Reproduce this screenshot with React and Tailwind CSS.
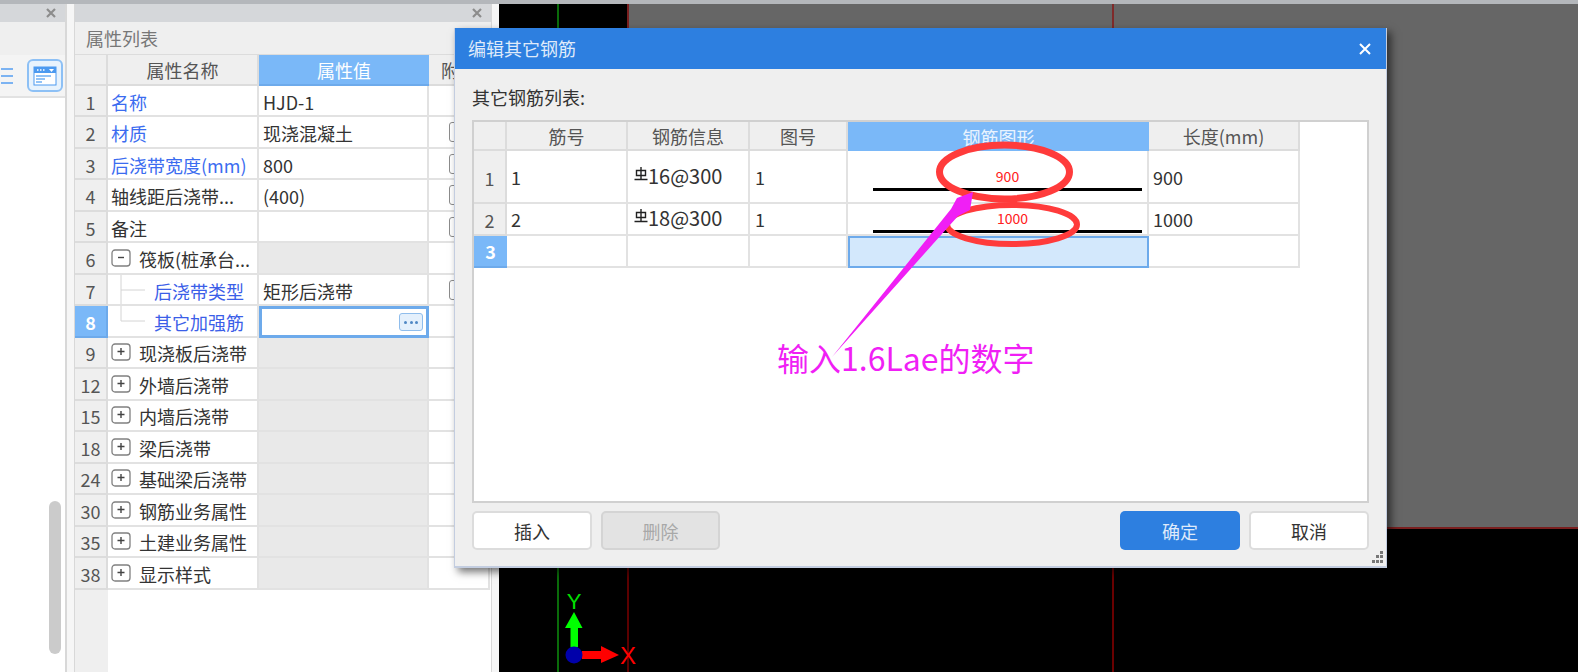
import React from 'react';

const font = { fontFamily: '"Noto Sans CJK SC", "Noto Sans", sans-serif' };

const props = [
  { no: '1', name: '名称', value: 'HJD-1', blue: true, hideCheck: true },
  { no: '2', name: '材质', value: '现浇混凝土', blue: true },
  { no: '3', name: '后浇带宽度(mm)', value: '800', blue: true },
  { no: '4', name: '轴线距后浇带...', value: '(400)' },
  { no: '5', name: '备注', value: '' },
  { no: '6', name: '筏板(桩承台...', toggle: '-' },
  { no: '7', name: '后浇带类型', value: '矩形后浇带', blue: true, child: true },
  { no: '8', name: '其它加强筋', blue: true, child: true, active: true, last: true },
  { no: '9', name: '现浇板后浇带', toggle: '+' },
  { no: '12', name: '外墙后浇带', toggle: '+' },
  { no: '15', name: '内墙后浇带', toggle: '+' },
  { no: '18', name: '梁后浇带', toggle: '+' },
  { no: '24', name: '基础梁后浇带', toggle: '+' },
  { no: '30', name: '钢筋业务属性', toggle: '+' },
  { no: '35', name: '土建业务属性', toggle: '+' },
  { no: '38', name: '显示样式', toggle: '+' },
];

function CloseX() {
  return (
    <svg width="12" height="12" viewBox="0 0 12 12" className="shrink-0">
      <path d="M2 2l8 8M10 2l-8 8" stroke="#8c8c8c" strokeWidth="2.2" />
    </svg>
  );
}

function ToggleBox({ sign }) {
  return (
    <svg width="20" height="18" viewBox="0 0 20 18" className="shrink-0">
      <rect x="1" y="1" width="18" height="16" rx="3" fill="#fff" stroke="#808080" strokeWidth="1.3" />
      <path d={sign === '+' ? 'M6.5 8.5h7M10 5v7' : 'M7 8.5h6'} stroke="#444" strokeWidth="1.4" />
    </svg>
  );
}

function TreeLines({ last }) {
  return (
    <svg width="26" height="32" viewBox="0 0 26 32" className="shrink-0 text-[#d4d4d4]">
      <path d={last ? 'M1 0v16h24' : 'M1 0v32M1 16h24'} fill="none" stroke="currentColor" strokeWidth="1" />
    </svg>
  );
}

function PropRow({ row }) {
  return (
    <div className="grid grid-cols-[33px_151px_170px_61px] h-[31.47px] text-[18px] leading-none text-[#333]">
      <div className={`flex items-center justify-center pt-[2px] border-r-2 border-b-2 ${row.active ? 'bg-[#7ab8f8] border-[#6daaeb] text-white font-bold' : 'bg-[#efefef] border-[#dcdcdc] text-[#555]'}`}>
        {row.no}
      </div>
      <div className="flex items-center border-r-2 border-b-2 border-[#e2e2e2] pl-[3px] bg-white whitespace-nowrap overflow-hidden">
        {row.toggle && <ToggleBox sign={row.toggle} />}
        {row.toggle && <span className="ml-[8px] pt-[2px]">{row.name}</span>}
        {row.child && <span className="ml-[9px]"><TreeLines last={row.last} /></span>}
        {row.child && <span className="ml-[8px] pt-[2px] text-[#3b5ee8]">{row.name}</span>}
        {!row.toggle && !row.child && <span className={`pt-[2px] ${row.blue ? 'text-[#3b6cf0]' : ''}`}>{row.name}</span>}
      </div>
      {row.active ? (
        <div className="flex items-center justify-end border-[3px] border-[#6daaeb] bg-white pr-[3px]">
          <div className="flex w-[24px] h-[18px] items-center justify-center gap-[2.5px] rounded-[3px] border border-[#8fbdec] bg-[#e4f0fc]">
            <span className="w-[3px] h-[3px] rounded-full bg-[#4f87c4]" />
            <span className="w-[3px] h-[3px] rounded-full bg-[#4f87c4]" />
            <span className="w-[3px] h-[3px] rounded-full bg-[#4f87c4]" />
          </div>
        </div>
      ) : (
        <div className={`flex items-center pt-[2px] border-r-2 border-b-2 border-[#e2e2e2] pl-[4px] ${row.toggle ? 'bg-[#e9e9e9]' : 'bg-white'}`}>
          {row.value}
        </div>
      )}
      <div className="flex items-center border-r-2 border-b-2 border-[#e2e2e2] bg-white pl-[20px]">
        {row.value !== undefined && !row.hideCheck && !row.toggle && (
          <div className="w-[18px] h-[20px] rounded-[3px] border border-[#8c8c8c]" />
        )}
      </div>
    </div>
  );
}

function LeftPanel() {
  return (
    <div className="flex flex-col w-[67px] shrink-0 border-r-2 border-[#d8d8d8] bg-white">
      <div className="flex h-[18px] items-center justify-end bg-[#d5d7da] pr-[8px]">
        <CloseX />
      </div>
      <div className="h-[33px] bg-[#efefef]" />
      <div className="flex h-[43px] items-center justify-between border-b-2 border-[#e2e2e2] bg-[#f4f4f4] pr-[2px]">
        <svg width="14" height="20" viewBox="0 0 14 20">
          <path d="M1 3h12M1 10h12M1 17h12" stroke="#7cb3f2" strokeWidth="1.8" />
        </svg>
        <div className="flex w-[36px] h-[33px] items-center justify-center rounded-[6px] border-2 border-[#8dc0f5] bg-[#e8f3fd]">
          <svg width="24" height="20" viewBox="0 0 24 20">
            <rect x="1" y="1" width="22" height="18" fill="#fff" stroke="#4c9af0" strokeWidth="1" />
            <rect x="1" y="1" width="22" height="6" fill="#4c9af0" />
            <path d="M4 4h1.5M7 4h1.5M10 4h1.5" stroke="#fff" strokeWidth="1.6" />
            <path d="M16 3h5l-2.5 3z" fill="#fff" />
            <path d="M3 10h15M3 13h9M3 16h6" stroke="#6fb0f3" strokeWidth="1.4" />
          </svg>
        </div>
      </div>
      <div className="flex flex-1 justify-end pr-[4px] pt-[403px]">
        <div className="w-[12px] h-[153px] rounded-full bg-[#cbcbcb]" />
      </div>
    </div>
  );
}

function PropertyPanel() {
  return (
    <div className="flex flex-col w-[418px] shrink-0 ml-[7px] mr-[7px] border-x border-[#d8d8d8] bg-white overflow-hidden">
      <div className="flex h-[18px] items-center justify-end bg-[#d5d7da] pr-[8px]">
        <CloseX />
      </div>
      <div className="flex h-[33px] items-center bg-[#efefef] pl-[11px] text-[18px] text-[#777] border-b border-[#dcdcdc]">
        属性列表
      </div>
      <div className="grid grid-cols-[33px_151px_170px_61px] h-[31px] text-[18px] leading-none text-[#555]">
        <div className="bg-[#efefef] border-r-2 border-b-2 border-[#dcdcdc]" />
        <div className="flex items-center justify-center bg-[#efefef] border-r-2 border-b-2 border-[#dcdcdc]">属性名称</div>
        <div className="flex items-center justify-center bg-[#7ab8f8] text-white border-b-2 border-[#6daaeb]">属性值</div>
        <div className="flex items-center pl-[12px] bg-[#efefef] border-b-2 border-[#dcdcdc]">附加</div>
      </div>
      {props.map((row) => (
        <PropRow key={row.no} row={row} />
      ))}
      <div className="flex flex-1">
        <div className="w-[33px] bg-[#efefef]" />
        <div className="flex-1 bg-white" />
      </div>
    </div>
  );
}

function Canvas() {
  return (
    <div className="flex-1 flex flex-col bg-black">
      <div className="flex h-[525px]">
        <div className="w-[60px] border-r-2 border-[#0a6b0a]" />
        <div className="w-[68px]" />
        <div className="flex-1 flex bg-[#666666] border-l-2 border-b-2 border-[#7a1f1f]">
          <div className="w-[485px] border-r-2 border-[#7f2a2a]" />
        </div>
      </div>
      <div className="flex flex-1">
        <div className="w-[60px] border-r-2 border-[#0a6b0a]" />
        <div className="w-[70px] border-r-2 border-[#5c0000]" />
        <div className="w-[485px] border-r-2 border-[#6a0000]" />
      </div>
    </div>
  );
}

function RebarMark() {
  return (
    <svg width="14" height="14" viewBox="0 0 14 14" className="shrink-0 mt-[-6px]">
      <path d="M2.5 3.500h9v5h-9zM7 0v12M0.500 12.500h13" fill="none" stroke="#222" strokeWidth="1.4" />
    </svg>
  );
}

const colsClass = 'grid grid-cols-[33px_121px_122px_98px_301px_151px]';

function RebarRow({ no, info, len, tall, shapeLabel, labelClass, shapeClass }) {
  return (
    <div className={`${colsClass} ${tall ? 'h-[53px]' : 'h-[32px]'} text-[18px] leading-none text-[#333]`}>
      <div className="flex items-center justify-center bg-[#efefef] border-r-2 border-b-2 border-[#dcdcdc] text-[#555] pt-[2px]">{no}</div>
      <div className="flex items-center pl-[4px] border-r-2 border-b-2 border-[#e2e2e2] bg-white">{no}</div>
      <div className="flex items-center pl-[6px] border-r-2 border-b-2 border-[#e2e2e2] bg-white">
        <RebarMark />
        <span className="text-[20px] mb-[2px]">{info}</span>
      </div>
      <div className="flex items-center pl-[5px] border-r-2 border-b-2 border-[#e2e2e2] bg-white">1</div>
      <div className={`flex flex-col justify-end border-r-2 border-b-2 border-[#e2e2e2] bg-white pl-[25px] pr-[5px] ${shapeClass}`}>
        <span className={`text-center text-[14px] text-[#ff2020] ${labelClass}`}>{shapeLabel}</span>
        <div className="h-[3px] bg-black" />
      </div>
      <div className="flex items-center pl-[4px] border-r-2 border-b-2 border-[#e2e2e2] bg-white">{len}</div>
    </div>
  );
}

function RebarTable() {
  return (
    <div className="flex-1 border-2 border-[#d0d0d0] bg-white overflow-hidden">
      <div className={`${colsClass} h-[29px] text-[18px] leading-none text-[#555]`}>
        <div className="bg-[#efefef] border-r-2 border-b-2 border-[#dcdcdc]" />
        <div className="flex items-center justify-center bg-[#efefef] border-r-2 border-b-2 border-[#dcdcdc]">筋号</div>
        <div className="flex items-center justify-center bg-[#efefef] border-r-2 border-b-2 border-[#dcdcdc]">钢筋信息</div>
        <div className="flex items-center justify-center bg-[#efefef] border-r-2 border-b-2 border-[#dcdcdc]">图号</div>
        <div className="flex items-center justify-center bg-[#7ab8f8] text-[#e9f3fe]">钢筋图形</div>
        <div className="flex items-center justify-center bg-[#efefef] border-r-2 border-b-2 border-[#dcdcdc]">长度(mm)</div>
      </div>
      <RebarRow no="1" info="16@300" len="900" tall shapeLabel="900" labelClass="mb-[5px]" shapeClass="pb-[11px]" />
      <RebarRow no="2" info="18@300" len="1000" shapeLabel="1000" labelClass="ml-[10px] mb-[5px]" shapeClass="pb-[1px]" />
      <div className={`${colsClass} h-[32px] text-[18px] leading-none`}>
        <div className="flex items-center justify-center bg-[#7ab8f8] text-white font-bold border-b-2 border-[#6daaeb]">3</div>
        <div className="border-r-2 border-b-2 border-[#e2e2e2]" />
        <div className="border-r-2 border-b-2 border-[#e2e2e2]" />
        <div className="border-r-2 border-b-2 border-[#e2e2e2]" />
        <div className="border-2 border-[#6daaeb] bg-[#d3e8fc]" />
        <div className="border-r-2 border-b-2 border-[#e2e2e2]" />
      </div>
    </div>
  );
}

function Grip() {
  return (
    <svg width="14" height="14" viewBox="0 0 14 14" className="absolute right-[2px] bottom-[2px]">
      <g fill="#777">
        <rect x="10" y="1" width="3" height="3" />
        <rect x="6" y="5" width="3" height="3" />
        <rect x="10" y="5" width="3" height="3" />
        <rect x="2" y="10" width="3" height="3" />
        <rect x="6" y="10" width="3" height="3" />
        <rect x="10" y="10" width="3" height="3" />
      </g>
    </svg>
  );
}

function Dialog() {
  return (
    <div className="absolute left-[454px] top-[28px] flex flex-col w-[933px] h-[540px] bg-[#efefef] border-x border-b-2 border-[#c3cde0] shadow-[4px_4px_8px_rgba(0,0,0,0.55)]">
      <div className="flex h-[41px] shrink-0 items-center justify-between bg-[#2d7fe0] pl-[13px] pr-[14px] text-[18px] text-[#dfeafa]">
        <span>编辑其它钢筋</span>
        <svg width="14" height="14" viewBox="0 0 14 14">
          <path d="M2 2l10 10M12 2L2 12" stroke="#fff" strokeWidth="2" />
        </svg>
      </div>
      <div className="flex flex-1 flex-col px-[17px] pb-[16px]">
        <div className="flex h-[51px] shrink-0 items-center pt-[5px] text-[18px] text-[#333]">其它钢筋列表:</div>
        <RebarTable />
        <div className="flex shrink-0 items-center gap-[9px] pt-[8px] text-[18px] leading-none">
          <button className="w-[120px] h-[39px] rounded-[5px] border-2 border-[#dcdcdc] bg-white text-[#333]">插入</button>
          <button className="w-[119px] h-[39px] rounded-[5px] border-2 border-[#d4d4d4] bg-[#e3e3e3] text-[#a8a8a8]">删除</button>
          <button className="ml-auto w-[120px] h-[39px] rounded-[5px] bg-[#2d7fe0] text-[#dfeafa]">确定</button>
          <button className="w-[120px] h-[39px] rounded-[5px] border-2 border-[#dcdcdc] bg-white text-[#333]">取消</button>
        </div>
      </div>
      <Grip />
    </div>
  );
}

// hand drawn marks on top of the screenshot
function Annotations() {
  return (
    <>
      <svg width="1578" height="672" viewBox="0 0 1578 672" className="absolute left-0 top-0 pointer-events-none">
        <ellipse cx="1004.5" cy="172" rx="65" ry="27" fill="none" stroke="#ff3b3b" strokeWidth="7" />
        <ellipse cx="1012" cy="224.5" rx="65" ry="19.5" fill="none" stroke="#ff3b3b" strokeWidth="6" />
        <path d="M832 357L951 209L957 198L973 192L970 210L958 216Z" fill="#f01ff5" />
        {/* axis gizmo */}
        <path d="M570.5 647V628H565L574 612L582.500 628H578V647Z" fill="#00ff00" />
        <path d="M582 651H601V646L619 655L601 663V659H582Z" fill="#ff0000" />
        <circle cx="574" cy="655" r="8.500" fill="#0000aa" />
        <text x="574" y="609" textAnchor="middle" fontSize="22" fill="#00e000" fontFamily="Liberation Sans">Y</text>
        <text x="628" y="664" textAnchor="middle" fontSize="24" fill="#ff0000" fontFamily="Liberation Sans">X</text>
      </svg>
      <div className="absolute left-[777px] top-[333px] text-[32px] leading-[48px] text-[#f01ff5] whitespace-nowrap">
        输入1.6Lae的数字
      </div>
    </>
  );
}

export default function App() {
  return (
    <div className="relative flex flex-col w-[1578px] h-[672px] overflow-hidden bg-[#f6f6f6]" style={font}>
      <div className="h-[4px] shrink-0 bg-[#b4b7bb]" />
      <div className="flex flex-1 min-h-0">
        <LeftPanel />
        <PropertyPanel />
        <Canvas />
      </div>
      <Dialog />
      <Annotations />
    </div>
  );
}
